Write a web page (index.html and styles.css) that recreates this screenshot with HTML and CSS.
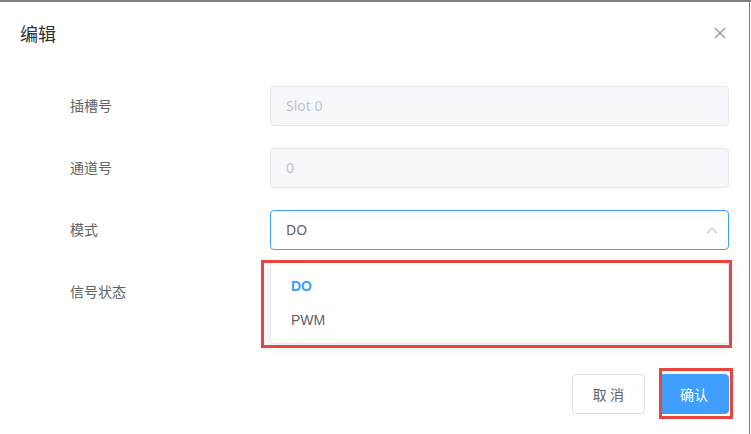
FILE: index.html
```html
<!DOCTYPE html>
<html lang="zh">
<head>
<meta charset="utf-8">
<title>编辑</title>
<link rel="stylesheet" href="styles.css">
</head>
<body>
<div class="dialog">
  <div class="dialog-header">
    <span class="dialog-title">编辑</span>
    <button class="dialog-close" type="button" aria-label="关闭">
      <svg width="12" height="12" viewBox="0 0 12 12"><path d="M1 1L11 11M11 1L1 11" stroke="#909399" stroke-width="1.2" fill="none"/></svg>
    </button>
  </div>
  <div class="dialog-body">
    <form class="form">
      <div class="form-item">
        <label class="form-label">插槽号</label>
        <div class="form-control">
          <div class="input is-disabled">Slot 0</div>
        </div>
      </div>
      <div class="form-item">
        <label class="form-label">通道号</label>
        <div class="form-control">
          <div class="input is-disabled">0</div>
        </div>
      </div>
      <div class="form-item">
        <label class="form-label">模式</label>
        <div class="form-control select">
          <div class="input is-focus">
            <span class="input-value">DO</span>
            <svg class="select-caret" width="12" height="8" viewBox="0 0 12 8"><path d="M1 7L6 2L11 7" stroke="#C0C4CC" stroke-width="1.2" fill="none"/></svg>
          </div>
          <div class="select-dropdown">
            <span class="popper-arrow"></span>
            <ul class="dropdown-list">
              <li class="dropdown-item is-selected">DO</li>
              <li class="dropdown-item">PWM</li>
            </ul>
            <span class="mark mark-dropdown"></span>
          </div>
        </div>
      </div>
      <div class="form-item">
        <label class="form-label">信号状态</label>
        <div class="form-control"></div>
      </div>
    </form>
  </div>
  <div class="dialog-footer">
    <button class="btn" type="button">取 消</button>
    <button class="btn btn-primary" type="button">确认<span class="mark mark-button"></span></button>
  </div>
</div>
</body>
</html>
```

FILE: styles.css
```css
* { box-sizing: border-box; }

html, body {
  margin: 0;
  padding: 0;
  background: #ffffff;
}

body {
  width: 751px;
  height: 434px;
  overflow: hidden;
  border-top: 2px solid #7f7f7f;
  font-family: "Noto Sans", "Noto Sans CJK SC", sans-serif;
}

.dialog {
  width: 750px;
  height: 432px;
  background: #ffffff;
  border-right: 1px solid #7a7a7a;
  display: flex;
  flex-direction: column;
  position: relative;
}

.dialog-header {
  padding: 20px 20px 10px;
  position: relative;
}

.dialog-title {
  display: block;
  font-size: 18px;
  line-height: 24px;
  color: #303133;
}

.dialog-close {
  position: absolute;
  top: 23px;
  right: 21px;
  width: 16px;
  height: 16px;
  padding: 0;
  border: 0;
  background: transparent;
  display: flex;
  align-items: center;
  justify-content: center;
}

.dialog-body {
  padding: 30px 20px;
}

.form {
  margin: 0;
  display: flex;
  flex-direction: column;
  gap: 22px;
  padding-bottom: 22px;
}

.form-item {
  display: flex;
  height: 40px;
}

.form-label {
  width: 250px;
  padding-left: 50px;
  font-size: 14px;
  line-height: 40px;
  color: #606266;
  flex-shrink: 0;
}

.form-control {
  flex: 1;
  position: relative;
}

.input {
  height: 40px;
  border: 1px solid #DCDFE6;
  border-radius: 4px;
  padding: 0 15px;
  font-size: 14px;
  line-height: 38px;
  color: #606266;
  background: #ffffff;
  display: flex;
  align-items: center;
  justify-content: space-between;
}

.input.is-disabled {
  background: #F5F7FA;
  border-color: #E4E7ED;
  color: #C0C4CC;
}

.input.is-focus {
  border-color: #409EFF;
  padding-right: 10px;
}

.select-caret {
  display: block;
}

.select-dropdown {
  position: absolute;
  top: 52px;
  left: 0;
  right: 0;
  background: #ffffff;
  border: 1px solid #E4E7ED;
  border-radius: 4px;
  box-shadow: 0 2px 12px 0 rgba(0, 0, 0, 0.1);
  z-index: 5;
}

.popper-arrow {
  position: absolute;
  top: -6px;
  left: 35px;
  width: 0;
  height: 0;
  border-left: 6px solid transparent;
  border-right: 6px solid transparent;
  border-bottom: 6px solid #EBEEF5;
}

.popper-arrow::after {
  content: "";
  position: absolute;
  left: -5px;
  top: 1px;
  border-left: 5px solid transparent;
  border-right: 5px solid transparent;
  border-bottom: 5px solid #ffffff;
}

.dropdown-list {
  list-style: none;
  margin: 0;
  padding: 6px 0;
}

.dropdown-item {
  height: 34px;
  line-height: 34px;
  padding: 0 20px;
  font-size: 14px;
  color: #606266;
  font-family: "Liberation Sans", "Noto Sans CJK SC", sans-serif;
}

.dropdown-item.is-selected {
  color: #409EFF;
  font-weight: bold;
}

.mark {
  position: absolute;
  border: 3px solid #E8453E;
  pointer-events: none;
}

.mark-dropdown {
  left: -10px;
  top: -3px;
  right: -4px;
  bottom: -5px;
}

.dialog-footer {
  padding: 10px 20px 20px;
  display: flex;
  justify-content: flex-end;
  gap: 14px;
}

.btn {
  position: relative;
  height: 40px;
  padding: 0 20px;
  border: 1px solid #DCDFE6;
  border-radius: 4px;
  background: #ffffff;
  color: #606266;
  font-size: 14px;
  line-height: 38px;
  font-family: "Noto Sans CJK SC", sans-serif;
}

.btn-primary {
  background: #409EFF;
  border-color: #409EFF;
  color: #ffffff;
}

.mark-button {
  left: -1px;
  top: -7px;
  right: -5px;
  bottom: -6px;
}
```
